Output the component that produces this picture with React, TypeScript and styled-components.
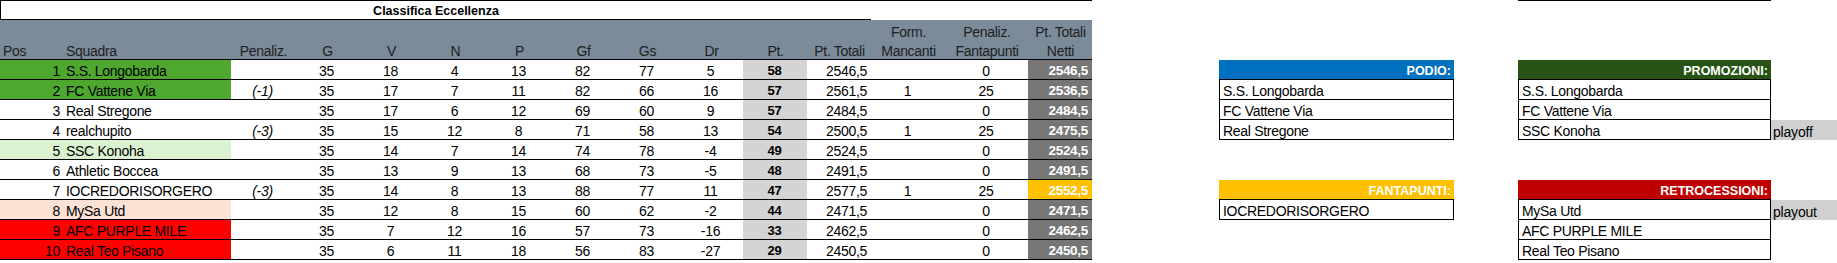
import React from "react";
import styled, { createGlobalStyle } from "styled-components";

type Team = {
  pos: number;
  name: string;
  pen?: string;
  stats: number[];
  pt: number;
  tot: string;
  form?: string;
  fanta: string;
  netti: string;
  fill?: string;
  nettiFill?: string;
};

const GREEN = "#4ea72e";
const LIGHT_GREEN = "#daf2d0";
const PEACH = "#fbe2d5";
const RED = "#ff0000";

const teams: Team[] = [
  { pos: 1, name: "S.S. Longobarda", stats: [35, 18, 4, 13, 82, 77, 5], pt: 58, tot: "2546,5", fanta: "0", netti: "2546,5", fill: GREEN },
  { pos: 2, name: "FC Vattene Via", pen: "(-1)", stats: [35, 17, 7, 11, 82, 66, 16], pt: 57, tot: "2561,5", form: "1", fanta: "25", netti: "2536,5", fill: GREEN },
  { pos: 3, name: "Real Stregone", stats: [35, 17, 6, 12, 69, 60, 9], pt: 57, tot: "2484,5", fanta: "0", netti: "2484,5" },
  { pos: 4, name: "realchupito", pen: "(-3)", stats: [35, 15, 12, 8, 71, 58, 13], pt: 54, tot: "2500,5", form: "1", fanta: "25", netti: "2475,5" },
  { pos: 5, name: "SSC Konoha", stats: [35, 14, 7, 14, 74, 78, -4], pt: 49, tot: "2524,5", fanta: "0", netti: "2524,5", fill: LIGHT_GREEN },
  { pos: 6, name: "Athletic Boccea", stats: [35, 13, 9, 13, 68, 73, -5], pt: 48, tot: "2491,5", fanta: "0", netti: "2491,5" },
  { pos: 7, name: "IOCREDORISORGERO", pen: "(-3)", stats: [35, 14, 8, 13, 88, 77, 11], pt: 47, tot: "2577,5", form: "1", fanta: "25", netti: "2552,5", nettiFill: "#ffc000" },
  { pos: 8, name: "MySa Utd", stats: [35, 12, 8, 15, 60, 62, -2], pt: 44, tot: "2471,5", fanta: "0", netti: "2471,5", fill: PEACH },
  { pos: 9, name: "AFC PURPLE MILE", stats: [35, 7, 12, 16, 57, 73, -16], pt: 33, tot: "2462,5", fanta: "0", netti: "2462,5", fill: RED },
  { pos: 10, name: "Real Teo Pisano", stats: [35, 6, 11, 18, 56, 83, -27], pt: 29, tot: "2450,5", fanta: "0", netti: "2450,5", fill: RED },
];

const statHeads = ["G", "V", "N", "P", "Gf", "Gs", "Dr"];

const GlobalStyle = createGlobalStyle`
  * { box-sizing: border-box; }
  body {
    margin: 0;
    background: #fff;
    color: #000;
    font-family: "Liberation Sans", Arial, sans-serif;
  }
`;

const Board = styled.div`
  display: flex;
  align-items: flex-start;
  width: 1837px;
`;

const Table = styled.div`
  display: grid;
  grid-template-columns: 63px 168px 64px repeat(8, 64px) 64px 74px 83px 64px;
  grid-auto-rows: 20px;
  width: 1092px;
`;

const TitleCell = styled.div`
  grid-column: 1 / 13;
  height: 20px;
  display: flex;
  align-items: flex-end;
  justify-content: center;
  border-top: 1px solid #000;
  border-left: 1px solid #000;
  border-bottom: 1px solid #000;
  font-size: 12.5px;
  line-height: 16px;
  font-weight: 700;
`;

const TitleFiller = styled.div`
  grid-column: 13 / 16;
  border-top: 1px solid #000;
`;

const HeadCell = styled.div<{ $align?: "left" | "center" }>`
  grid-row: span 2;
  height: 40px;
  display: flex;
  align-items: flex-end;
  justify-content: ${(p) => (p.$align === "left" ? "flex-start" : "center")};
  padding: 0 2px 0 3px;
  background: #7b8b9a;
  border-bottom: 1px solid #000;
  color: #1e1e1e;
  font-size: 14px;
  letter-spacing: -0.3px;
  text-align: center;
  white-space: nowrap;
`;

const HeadLabel = styled.span`
  line-height: 19px;
  margin-bottom: -2px;
`;

const Cell = styled.div<{ $bg?: string }>`
  height: 20px;
  display: flex;
  align-items: flex-end;
  justify-content: center;
  padding: 0 4px 0 3px;
  border-bottom: 1px solid #000;
  background: ${(p) => p.$bg ?? "transparent"};
  font-size: 14px;
  line-height: 16px;
  letter-spacing: -0.3px;
  white-space: nowrap;
`;

const PosCell = styled(Cell)`
  justify-content: flex-end;
  padding-right: 3px;
`;

const TeamCell = styled(Cell)`
  justify-content: flex-start;
`;

const PenCell = styled(Cell)`
  font-style: italic;
`;

const PointsCell = styled(Cell)`
  background: #d4d4d4;
  font-size: 13px;
  font-weight: 700;
`;

const TotalCell = styled(Cell)`
  justify-content: flex-end;
`;

const NetCell = styled(Cell)<{ $fill?: string }>`
  justify-content: flex-end;
  background: ${(p) => p.$fill ?? "#767676"};
  color: #fff;
  font-size: 13.5px;
  font-weight: 700;
`;

const SideCol = styled.div<{ $gap: number }>`
  margin-left: ${(p) => p.$gap}px;
  display: flex;
  flex-direction: column;
`;

const TopRule = styled.div<{ $w: number; $line?: boolean }>`
  width: ${(p) => p.$w}px;
  height: 60px;
  border-top: ${(p) => (p.$line ? "1px solid #000" : "none")};
`;

const Panel = styled.section`
  display: flex;
  flex-direction: column;
  & + & {
    margin-top: 40px;
  }
`;

const PanelHead = styled.div<{ $bg: string; $w: number }>`
  width: ${(p) => p.$w}px;
  height: 20px;
  display: flex;
  align-items: flex-end;
  justify-content: flex-end;
  padding-right: 3px;
  background: ${(p) => p.$bg};
  border-bottom: 1px solid #000;
  color: #fff;
  font-size: 12.5px;
  line-height: 16px;
  font-weight: 700;
`;

const PanelRow = styled.div`
  display: flex;
`;

const EntryCell = styled.div<{ $w: number }>`
  width: ${(p) => p.$w}px;
  height: 20px;
  display: flex;
  align-items: flex-end;
  padding-left: 3px;
  border: 1px solid #000;
  border-top: none;
  font-size: 14px;
  line-height: 16px;
  letter-spacing: -0.3px;
  white-space: nowrap;
`;

const Note = styled.div<{ $on?: boolean }>`
  width: 66px;
  height: 20px;
  display: flex;
  align-items: flex-end;
  padding-left: 2px;
  background: ${(p) => (p.$on ? "#d0d0d0" : "transparent")};
  font-size: 14px;
  line-height: 16px;
  letter-spacing: -0.2px;
`;

type Entry = { name: string; note?: string };

const SidePanel = ({
  title,
  color,
  width,
  entries,
  notes,
}: {
  title: string;
  color: string;
  width: number;
  entries: Entry[];
  notes?: boolean;
}) => (
  <Panel>
    <PanelRow>
      <PanelHead $bg={color} $w={width}>
        {title}
      </PanelHead>
      {notes && <Note />}
    </PanelRow>
    {entries.map((e) => (
      <PanelRow key={e.name}>
        <EntryCell $w={width}>{e.name}</EntryCell>
        {notes && <Note $on={!!e.note}>{e.note}</Note>}
      </PanelRow>
    ))}
  </Panel>
);

const App = () => (
  <>
    <GlobalStyle />
    <Board>
      <Table>
        <TitleCell>Classifica Eccellenza</TitleCell>
        <TitleFiller />

        <HeadCell $align="left">
          <HeadLabel>Pos</HeadLabel>
        </HeadCell>
        <HeadCell $align="left">
          <HeadLabel>Squadra</HeadLabel>
        </HeadCell>
        <HeadCell>
          <HeadLabel>Penaliz.</HeadLabel>
        </HeadCell>
        {statHeads.map((h) => (
          <HeadCell key={h}>
            <HeadLabel>{h}</HeadLabel>
          </HeadCell>
        ))}
        <HeadCell>
          <HeadLabel>Pt.</HeadLabel>
        </HeadCell>
        <HeadCell>
          <HeadLabel>Pt. Totali</HeadLabel>
        </HeadCell>
        <HeadCell>
          <HeadLabel>
            Form.
            <br />
            Mancanti
          </HeadLabel>
        </HeadCell>
        <HeadCell>
          <HeadLabel>
            Penaliz.
            <br />
            Fantapunti
          </HeadLabel>
        </HeadCell>
        <HeadCell>
          <HeadLabel>
            Pt. Totali
            <br />
            Netti
          </HeadLabel>
        </HeadCell>

        {teams.map((t) => (
          <React.Fragment key={t.pos}>
            <PosCell $bg={t.fill}>{t.pos}</PosCell>
            <TeamCell $bg={t.fill}>{t.name}</TeamCell>
            <PenCell>{t.pen}</PenCell>
            {t.stats.map((s, i) => (
              <Cell key={i}>{s}</Cell>
            ))}
            <PointsCell>{t.pt}</PointsCell>
            <TotalCell>{t.tot}</TotalCell>
            <Cell>{t.form}</Cell>
            <Cell>{t.fanta}</Cell>
            <NetCell $fill={t.nettiFill}>{t.netti}</NetCell>
          </React.Fragment>
        ))}
      </Table>

      <SideCol $gap={127}>
        <TopRule $w={235} />
        <SidePanel
          title="PODIO:"
          color="#0070c0"
          width={235}
          entries={[{ name: "S.S. Longobarda" }, { name: "FC Vattene Via" }, { name: "Real Stregone" }]}
        />
        <SidePanel title="FANTAPUNTI:" color="#ffc000" width={235} entries={[{ name: "IOCREDORISORGERO" }]} />
      </SideCol>

      <SideCol $gap={64}>
        <TopRule $w={253} $line />
        <SidePanel
          title="PROMOZIONI:"
          color="#275317"
          width={253}
          notes
          entries={[{ name: "S.S. Longobarda" }, { name: "FC Vattene Via" }, { name: "SSC Konoha", note: "playoff" }]}
        />
        <SidePanel
          title="RETROCESSIONI:"
          color="#c00000"
          width={253}
          notes
          entries={[{ name: "MySa Utd", note: "playout" }, { name: "AFC PURPLE MILE" }, { name: "Real Teo Pisano" }]}
        />
      </SideCol>
    </Board>
  </>
);

export default App;
